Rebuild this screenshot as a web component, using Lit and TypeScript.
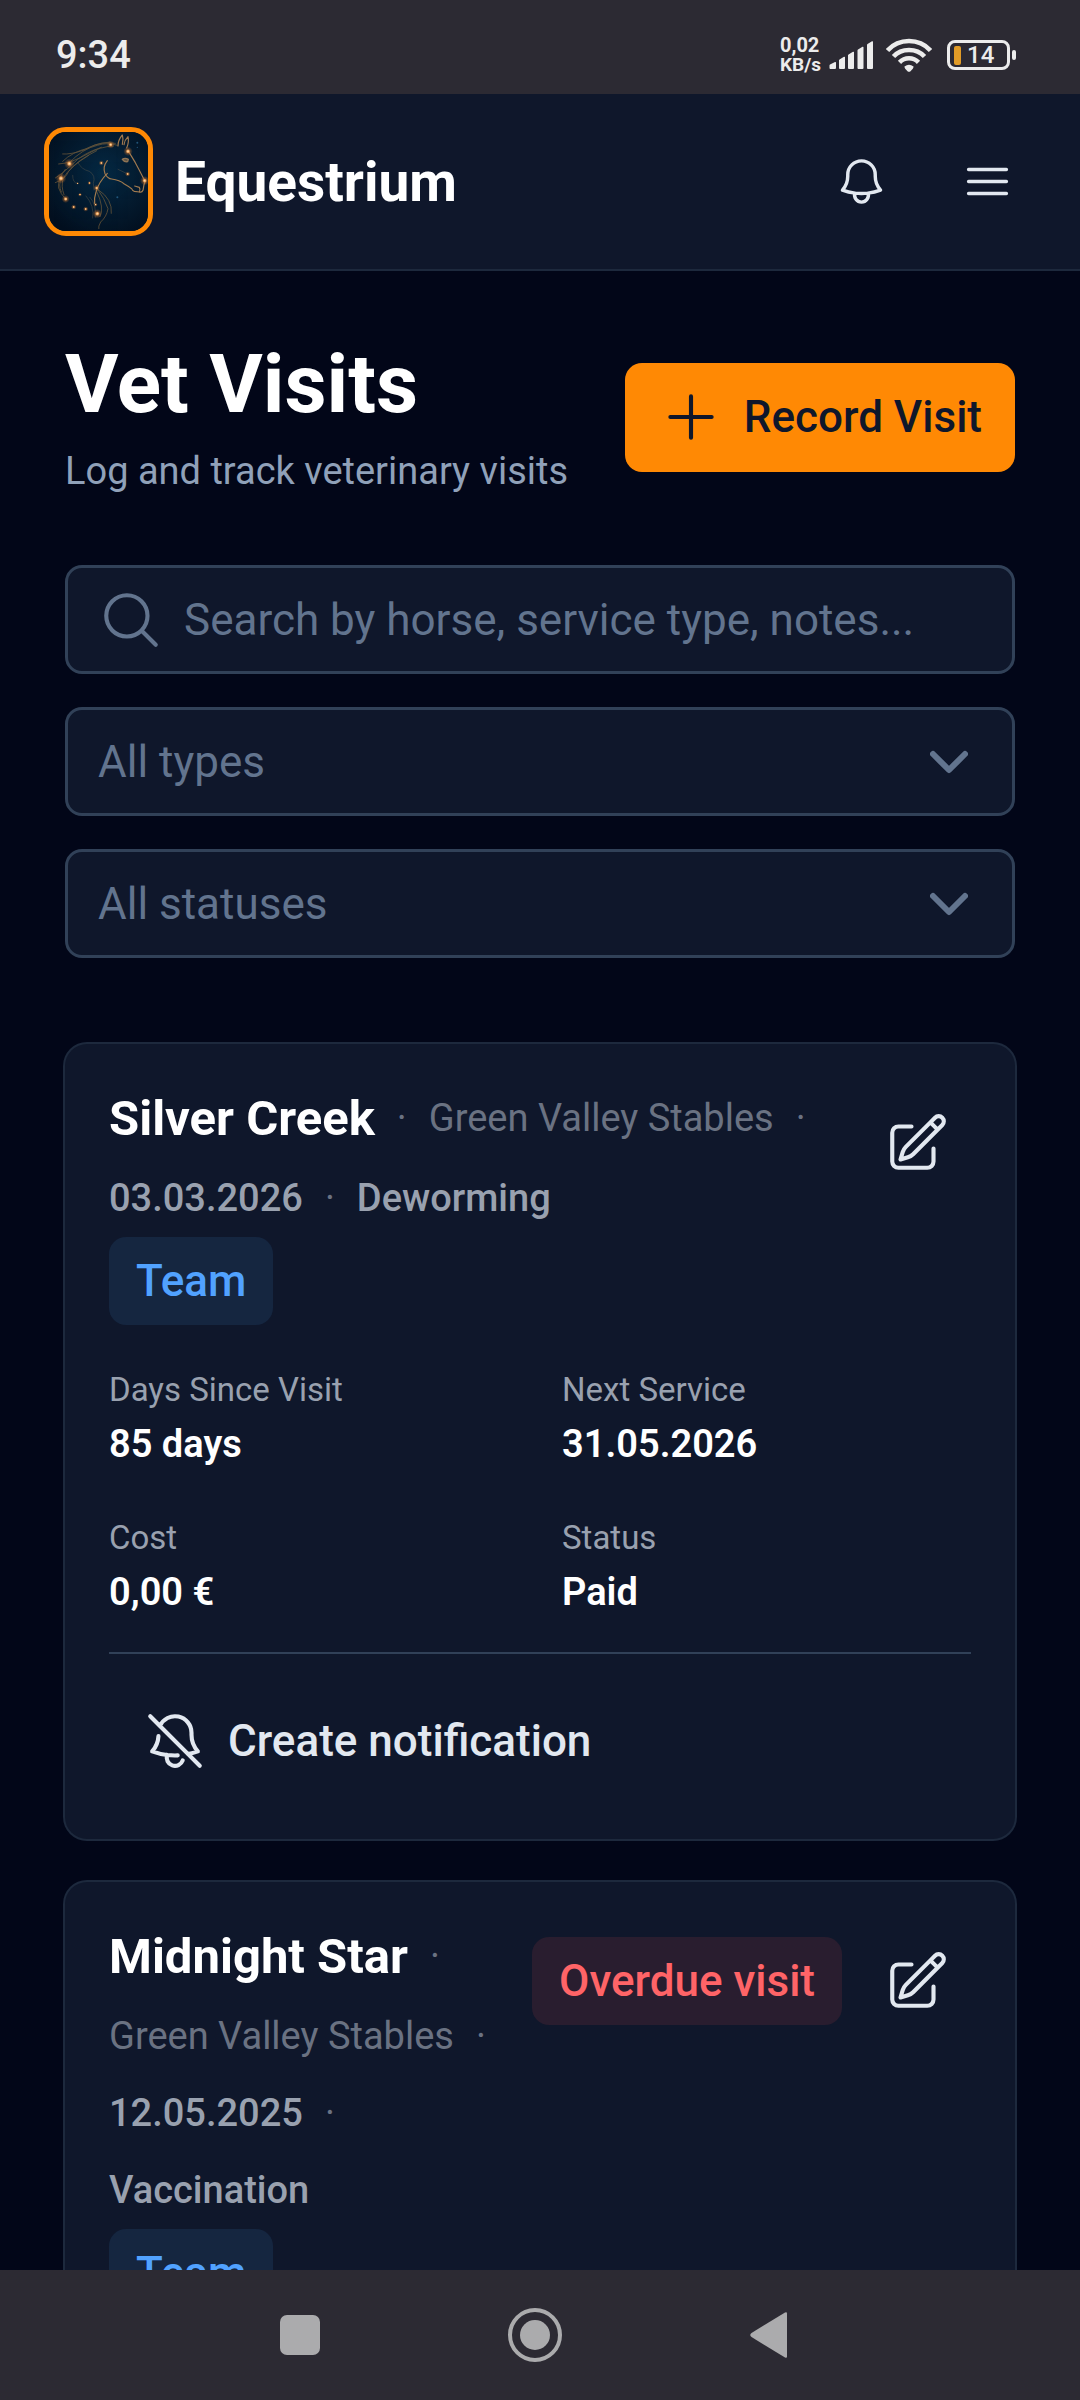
import { LitElement, html, css, svg, nothing } from "lit";
import { customElement, property } from "lit/decorators.js";

interface Visit {
  horse: string;
  stable: string;
  date: string;
  service: string;
  tag: string;
  alert?: string;
  stats: { label: string; value: string }[];
  notify: boolean;
}

const visits: Visit[] = [
  {
    horse: "Silver Creek",
    stable: "Green Valley Stables",
    date: "03.03.2026",
    service: "Deworming",
    tag: "Team",
    stats: [
      { label: "Days Since Visit", value: "85 days" },
      { label: "Next Service", value: "31.05.2026" },
      { label: "Cost", value: "0,00 €" },
      { label: "Status", value: "Paid" },
    ],
    notify: true,
  },
  {
    horse: "Midnight Star",
    stable: "Green Valley Stables",
    date: "12.05.2025",
    service: "Vaccination",
    tag: "Team",
    alert: "Overdue visit",
    stats: [],
    notify: false,
  },
];

const paths = {
  bell: "M14.857 17.082a23.848 23.848 0 0 0 5.454-1.31A8.967 8.967 0 0 1 18 9.75V9A6 6 0 0 0 6 9v.75a8.967 8.967 0 0 1-2.312 6.022c1.733.64 3.56 1.085 5.455 1.31m5.714 0a24.255 24.255 0 0 1-5.714 0m5.714 0a3 3 0 1 1-5.714 0",
  bellSlash:
    "M9.143 17.082a24.248 24.248 0 0 0 3.844.148m-3.844-.148a23.856 23.856 0 0 1-5.455-1.31 8.964 8.964 0 0 0 2.3-5.542m3.155 6.852a3 3 0 0 0 5.667 1.97m1.965-2.277L21 21m-4.225-4.225a23.81 23.81 0 0 0 3.536-1.003A8.967 8.967 0 0 1 18 9.75V9A6 6 0 0 0 6.53 6.53m10.245 10.245L6.53 6.53M3 3l3.53 3.53",
  menu: "M3.75 6.75h16.5M3.75 12h16.5m-16.5 5.25h16.5",
  plus: "M12 4.5v15m7.5-7.5h-15",
  search: "m21 21-5.197-5.197m0 0A7.5 7.5 0 1 0 5.196 5.196a7.5 7.5 0 0 0 10.607 10.607Z",
  edit: "m16.862 4.487 1.687-1.688a1.875 1.875 0 1 1 2.652 2.652L10.582 16.07a4.5 4.5 0 0 1-1.897 1.13L6 18l.8-2.685a4.5 4.5 0 0 1 1.13-1.897l8.932-8.931Zm0 0L19.5 7.125M18 14v4.75A2.25 2.25 0 0 1 15.75 21H5.25A2.25 2.25 0 0 1 3 18.75V8.25A2.25 2.25 0 0 1 5.25 6H10",
};

const icon = (name: keyof typeof paths) => html`
  <svg class="icon" viewBox="0 0 24 24" aria-hidden="true"><path d=${paths[name]}></path></svg>
`;

const iconStyles = css`
  .icon {
    display: block;
    flex: none;
    width: 66px;
    height: 66px;
    fill: none;
    stroke: currentColor;
    stroke-width: 1.5;
    stroke-linecap: round;
    stroke-linejoin: round;
  }
  button {
    font: inherit;
    color: inherit;
    background: none;
    border: 0;
    padding: 0;
    cursor: pointer;
  }
`;

@customElement("status-bar")
class StatusBar extends LitElement {
  static styles = css`
    :host {
      display: flex;
      align-items: center;
      justify-content: space-between;
      flex: none;
      box-sizing: border-box;
      height: 94px;
      padding: 16px 64px 0 56px;
      background: #2c2a33;
      color: #ececec;
    }
    .time {
      font-size: 38px;
      font-weight: 500;
    }
    .side {
      display: flex;
      align-items: center;
    }
    .speed {
      display: flex;
      flex-direction: column;
      font-size: 20px;
      line-height: 20px;
      font-weight: 700;
      margin-right: 8px;
    }
    .unit {
      font-size: 19px;
    }
    .signal {
      width: 46px;
      height: 30px;
      margin-right: 11px;
      fill: #ececec;
    }
    .wifi {
      width: 46px;
      height: 34px;
      margin-right: 15px;
    }
    .battery {
      display: flex;
      align-items: center;
      box-sizing: border-box;
      width: 63px;
      height: 30px;
      padding: 0 4px;
      gap: 6px;
      border: 3px solid #ececec;
      border-radius: 8px;
      font-size: 24px;
      line-height: 24px;
      font-weight: 500;
    }
    .charge {
      width: 7px;
      height: 19px;
      border-radius: 2px;
      background: #e29c27;
    }
    .nub {
      width: 4px;
      height: 10px;
      margin-left: 2px;
      border-radius: 2px;
      background: #ececec;
    }
  `;

  render() {
    return html`
      <span class="time">9:34</span>
      <div class="side">
        <div class="speed"><span>0,02</span><span class="unit">KB/s</span></div>
        <svg class="signal" viewBox="0 0 46 30" aria-hidden="true">
          <path
            d="M1 24.5l5-2.5q1-.4 1 .8V28q0 1-1 1H1.500q-1 0-1-1v-2.500q0-.6.5-1zM10.500 19.500l4.500-2.700q1-.5 1 .7V28q0 1-1 1h-4q-1 0-1-1v-7.500q0-.6.5-1zM19.500 14.500l4.500-2.700q1-.5 1 .7V28q0 1-1 1h-4q-1 0-1-1V15.500q0-.6.5-1zM29 9.500l4.500-2.700q1-.5 1 .7V28q0 1-1 1h-4q-1 0-1-1V10.500q0-.6.5-1zM38.500 4l4.500-2.700q1-.5 1 .7V28q0 1-1 1h-4q-1 0-1-1V5q0-.6.5-1z"
          ></path>
        </svg>
        <svg class="wifi" viewBox="0 0 46 34" aria-hidden="true">
          <g fill="none" stroke="#ececec" stroke-width="4.600">
            <path d="M1.500 12.500Q10 3 23 3t21.500 9.500"></path>
            <path d="M7.500 18.500Q13.500 12 23 12t15.500 6.500"></path>
            <path d="M13.500 24.300Q17.500 20.300 23 20.300t9.500 4"></path>
          </g>
          <path fill="#ececec" d="M18.500 28.500q4.500-3.500 9 0 .5 1.500-3 4.700-1.500 1.200-3 0-3.500-3.200-3-4.700z"></path>
        </svg>
        <div class="battery"><span class="charge"></span><span>14</span></div>
        <span class="nub"></span>
      </div>
    `;
  }
}

const stars = [
  [118, 161, 8],
  [93, 205, 8],
  [107, 267, 6],
  [242, 104, 6],
  [294, 124, 7],
  [344, 212, 7],
  [202, 311, 7],
  [200, 234, 5],
  [214, 159, 4],
  [131, 291, 4],
  [167, 297, 4],
  [150, 254, 3],
  [178, 219, 3],
  [293, 192, 4],
  [143, 220, 2],
  [197, 284, 3],
];

@customElement("app-header")
class AppHeader extends LitElement {
  static styles = [
    iconStyles,
    css`
      :host {
        display: flex;
        align-items: center;
        flex: none;
        gap: 22px;
        padding: 33px 44px;
        background: #0f172b;
        border-bottom: 2px solid #1d293d;
      }
      .logo {
        display: block;
        box-sizing: border-box;
        width: 109px;
        height: 109px;
        border: 5px solid #ff8904;
        border-radius: 22px;
        background: #031a2e;
      }
      .name {
        flex: 1;
        font-size: 55px;
        line-height: 66px;
        font-weight: 700;
        color: #ffffff;
      }
      .tools {
        display: flex;
        gap: 28px;
        color: #e2e8f0;
      }
      .tool {
        display: grid;
        place-items: center;
        width: 98px;
        height: 98px;
      }
      .tool .icon {
        width: 55px;
        height: 55px;
      }
    `,
  ];

  render() {
    return html`
      <svg class="logo" viewBox="57 66 297 297" role="img" aria-label="Horse constellation">
        <defs>
          <radialGradient id="sky" cx="55%" cy="42%" r="68%">
            <stop offset="0" stop-color="#062a44"></stop>
            <stop offset="1" stop-color="#020f1f"></stop>
          </radialGradient>
          <radialGradient id="glow">
            <stop offset="0" stop-color="#ffe7c0"></stop>
            <stop offset=".25" stop-color="#f0a860"></stop>
            <stop offset=".5" stop-color="#c07030" stop-opacity=".45"></stop>
            <stop offset="1" stop-color="#c07030" stop-opacity="0"></stop>
          </radialGradient>
        </defs>
        <rect x="57" y="66" width="297" height="297" fill="url(#sky)"></rect>
        <g fill="none" stroke-linecap="round" stroke-linejoin="round">
          <g stroke="#a07a50" stroke-width="3.500">
            <path
              d="M294 122q10 16 22 36 12 22 27 52 3 8-1 14l-3 17q-3 7-10 5l-16-2q-6-2-8-8-8-6-22-14-14-12-38-15-12-1-20-16-8-20 7-39"
            ></path>
            <path d="M232 190q-26 26-34 56-6 18-4 34"></path>
            <path d="M328 246q4-8 0-14l-14-4"></path>
            <path d="M264 108q0-18 13-33 4 12 0 28M282 104q2-14 12-24 4 16-4 34"></path>
          </g>
          <path stroke="#8f7454" stroke-width="4" fill="#5b5546" d="M277 148q8-6 18 0l-2 7q-10 2-16-7z"></path>
          <g stroke="#94703f" stroke-width="2.500" opacity=".65">
            <path d="M262 106q-30-10-60 0-44 10-84 52"></path>
            <path d="M256 100q-44-8-80 14-50 12-78 40"></path>
            <path d="M250 108q-40 2-74 22-52 30-90 32"></path>
            <path d="M240 96q-50 6-78 24-40 14-64 12"></path>
            <path d="M214 112q-60 20-86 50-30 28-52 42"></path>
            <path d="M200 122q-60 30-84 62-10 24-40 34"></path>
            <path d="M176 136q-56 34-76 68-8 24 2 50"></path>
            <path d="M106 178q-24 30-20 56 6 18 20 32"></path>
            <path d="M94 206q-10 18 0 40"></path>
            <path d="M202 236q22 30 32 60-4 24-22 40-8 14-6 20"></path>
            <path d="M206 240q42 28 38 70"></path>
            <path d="M200 244q24 50 10 76"></path>
          </g>
          <g stroke="#6f6350" stroke-width="2" opacity=".55">
            <path d="M144 158q10 20 34 26 20 12 12 36l2 20"></path>
            <path d="M128 196q0 24 14 24"></path>
            <path d="M168 258q26 30 20 66M180 262q20 22 16 60"></path>
            <path d="M264 178l29 14"></path>
          </g>
        </g>
        ${stars.map(([x, y, r]) => svg`<circle cx=${x} cy=${y} r=${r * 2} fill="url(#glow)"></circle>`)}
        <g fill="#2f6f9a" opacity=".7">
          <circle cx="322" cy="98" r="3"></circle>
          <circle cx="322" cy="112" r="2"></circle>
          <circle cx="262" cy="262" r="3"></circle>
        </g>
      </svg>
      <span class="name">Equestrium</span>
      <div class="tools">
        <button class="tool" type="button" aria-label="Notifications">${icon("bell")}</button>
        <button class="tool" type="button" aria-label="Menu">${icon("menu")}</button>
      </div>
    `;
  }
}

@customElement("visit-filters")
class VisitFilters extends LitElement {
  static styles = [
    iconStyles,
    css`
      :host {
        display: flex;
        flex-direction: column;
        gap: 33px;
        color: #62748e;
        font-size: 44px;
      }
      .field {
        display: flex;
        align-items: center;
        box-sizing: border-box;
        height: 109px;
        border: 3px solid #314158;
        border-radius: 17px;
        background: #0f172b;
      }
      .search {
        gap: 20px;
        padding: 0 30px;
      }
      .input,
      .select {
        font: inherit;
        color: inherit;
        background: none;
        border: 0;
        margin: 0;
        padding: 0;
        outline: none;
        min-width: 0;
      }
      .input {
        flex: 1;
      }
      .input::placeholder {
        color: #62748e;
        opacity: 1;
      }
      .pick {
        display: grid;
        grid-template-columns: 1fr 38px;
        padding-right: 44px;
      }
      .select {
        grid-area: 1 / 1 / 2 / 3;
        align-self: stretch;
        appearance: none;
        padding-left: 30px;
      }
      .chevron {
        grid-area: 1 / 2;
        width: 38px;
        height: 24px;
        fill: none;
        stroke: #62748e;
        stroke-width: 6;
        stroke-linecap: round;
        stroke-linejoin: round;
        pointer-events: none;
      }
    `,
  ];

  private pick(name: string, text: string) {
    return html`
      <div class="field pick">
        <select class="select" aria-label=${name}>
          <option>${text}</option>
        </select>
        <svg class="chevron" viewBox="0 0 38 24" aria-hidden="true"><path d="M3 4l16 16L35 4"></path></svg>
      </div>
    `;
  }

  render() {
    return html`
      <label class="field search">
        ${icon("search")}
        <input
          class="input"
          type="text"
          aria-label="Search visits"
          placeholder="Search by horse, service type, notes..."
        />
      </label>
      ${this.pick("Type", "All types")} ${this.pick("Status", "All statuses")}
    `;
  }
}

@customElement("visit-card")
class VisitCard extends LitElement {
  @property({ attribute: false }) visit!: Visit;

  static styles = [
    iconStyles,
    css`
      :host {
        display: block;
        padding: 44px;
        border-radius: 22px;
        background: #0f172b;
        box-shadow: 0 0 0 2px #1d293d;
      }
      .top {
        display: flex;
        align-items: flex-start;
        gap: 20px;
      }
      .summary {
        flex: 1;
        min-width: 0;
        display: flex;
        flex-direction: column;
        align-items: flex-start;
        gap: 11px;
      }
      .facts {
        display: flex;
        flex-wrap: wrap;
        align-items: center;
        gap: 22px;
        font-size: 38px;
        line-height: 55px;
        color: #6a7282;
      }
      .horse {
        margin: 0;
        font-size: 49px;
        line-height: 61px;
        font-weight: 700;
        color: #ffffff;
      }
      .strong {
        font-weight: 500;
        color: #99a1af;
      }
      .badge {
        padding: 11px 27px;
        border-radius: 17px;
        font-size: 44px;
        line-height: 66px;
        font-weight: 500;
        white-space: nowrap;
      }
      .info {
        color: #51a2ff;
        background: #152640;
      }
      .danger {
        color: #ff6467;
        background: #291d2f;
      }
      .actions {
        display: flex;
        align-items: center;
        gap: 20px;
        color: #e2e8f0;
      }
      .edit {
        display: grid;
        place-items: center;
        width: 109px;
        height: 109px;
      }
      .stats {
        display: grid;
        grid-template-columns: 1fr 1fr;
        gap: 44px;
        margin: 43px 0 32px;
      }
      .stat {
        display: flex;
        flex-direction: column;
        gap: 5px;
      }
      .label {
        font-size: 33px;
        line-height: 44px;
        color: #99a1af;
      }
      .value {
        margin: 0;
        font-size: 38px;
        line-height: 55px;
        font-weight: 600;
        color: #ffffff;
      }
      .footer {
        padding-top: 32px;
        border-top: 2px solid #314158;
      }
      .notify {
        display: flex;
        align-items: center;
        gap: 20px;
        height: 109px;
        padding: 0 33px;
        font-size: 44px;
        font-weight: 500;
        color: #e2e8f0;
      }
    `,
  ];

  render() {
    const v = this.visit;
    const dot = html`<span>·</span>`;
    return html`
      <div class="top">
        <div class="summary">
          <div class="facts">
            <h2 class="horse">${v.horse}</h2>
            ${dot}<span>${v.stable}</span>${dot}
            <span class="strong">${v.date}</span>${dot}
            <span class="strong">${v.service}</span>
          </div>
          <span class="badge info">${v.tag}</span>
        </div>
        <div class="actions">
          ${v.alert ? html`<span class="badge danger">${v.alert}</span>` : nothing}
          <button class="edit" type="button" aria-label="Edit visit">${icon("edit")}</button>
        </div>
      </div>
      ${v.stats.length
        ? html`<dl class="stats">
            ${v.stats.map(
              (s) => html`<div class="stat">
                <dt class="label">${s.label}</dt>
                <dd class="value">${s.value}</dd>
              </div>`
            )}
          </dl>`
        : nothing}
      ${v.notify
        ? html`<div class="footer">
            <button class="notify" type="button">${icon("bellSlash")}<span>Create notification</span></button>
          </div>`
        : nothing}
    `;
  }
}

@customElement("system-nav")
class SystemNav extends LitElement {
  static styles = [
    iconStyles,
    css`
      :host {
        display: flex;
        align-items: center;
        justify-content: center;
        gap: 125px;
        flex: none;
        height: 130px;
        padding-right: 10px;
        background: #2c2a33;
      }
      .key {
        display: grid;
        place-items: center;
        width: 110px;
        height: 110px;
      }
      .glyph {
        width: 56px;
        height: 56px;
        fill: #ababad;
      }
    `,
  ];

  render() {
    return html`
      <button class="key" type="button" aria-label="Recent apps">
        <svg class="glyph" viewBox="0 0 56 56"><rect x="8" y="8" width="40" height="40" rx="7"></rect></svg>
      </button>
      <button class="key" type="button" aria-label="Home">
        <svg class="glyph" viewBox="0 0 56 56">
          <circle cx="28" cy="28" r="25" fill="none" stroke="#ababad" stroke-width="4"></circle>
          <circle cx="28" cy="28" r="15"></circle>
        </svg>
      </button>
      <button class="key" type="button" aria-label="Back">
        <svg class="glyph" viewBox="0 0 56 56">
          <path d="M45 6.500v43q0 2-2 1L9.500 30q-2.500-2 0-4L43 5.500q2-1 2 1z"></path>
        </svg>
      </button>
    `;
  }
}

@customElement("app-root")
class AppRoot extends LitElement {
  static styles = [
    iconStyles,
    css`
      :host {
        display: flex;
        flex-direction: column;
        height: 100vh;
        background: #020618;
        font-family: Roboto, "Liberation Sans", sans-serif;
      }
      .page {
        flex: 1;
        min-height: 0;
        overflow-y: auto;
        scrollbar-width: none;
        padding: 64px 65px;
      }
      .heading {
        display: flex;
        align-items: center;
        justify-content: space-between;
        gap: 22px;
        margin-bottom: 66px;
      }
      .title {
        margin: 0 0 10px;
        font-size: 82px;
        line-height: 99px;
        font-weight: 700;
        color: #ffffff;
      }
      .subtitle {
        margin: 0;
        font-size: 38px;
        line-height: 55px;
        color: #90a1b9;
      }
      .record {
        display: flex;
        align-items: center;
        flex: none;
        gap: 20px;
        height: 109px;
        padding: 0 33px;
        border-radius: 17px;
        background: #ff8904;
        color: #0f172b;
        font-size: 44px;
        font-weight: 500;
      }
      .list {
        display: flex;
        flex-direction: column;
        gap: 43px;
        margin-top: 86px;
      }
    `,
  ];

  render() {
    return html`
      <status-bar></status-bar>
      <app-header></app-header>
      <main class="page">
        <div class="heading">
          <div>
            <h1 class="title">Vet Visits</h1>
            <p class="subtitle">Log and track veterinary visits</p>
          </div>
          <button class="record" type="button">${icon("plus")}<span>Record Visit</span></button>
        </div>
        <visit-filters></visit-filters>
        <div class="list">${visits.map((v) => html`<visit-card .visit=${v}></visit-card>`)}</div>
      </main>
      <system-nav></system-nav>
    `;
  }
}
